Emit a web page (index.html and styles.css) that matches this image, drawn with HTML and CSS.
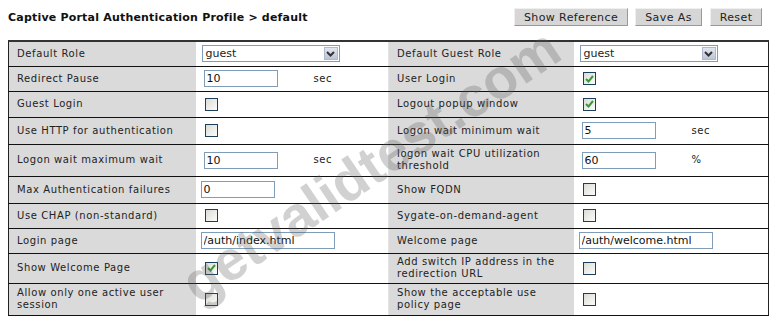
FILE: index.html
```html
<!DOCTYPE html>
<html lang="en">
<head>
    <meta charset="UTF-8">
    <title>Captive Portal Authentication Profile</title>
    <link rel="stylesheet" href="styles.css">
</head>
<body>
    <div class="page">
        <div class="top-bar">
            <h1>Captive Portal Authentication Profile &gt; default</h1>
            <div class="actions">
                <button class="btn w-ref">Show Reference</button>
                <button class="btn w-save">Save As</button>
                <button class="btn w-reset">Reset</button>
            </div>
        </div>

        <table class="profile">
            <colgroup>
                <col class="c-label">
                <col class="c-value">
                <col class="c-label2">
                <col class="c-value2">
            </colgroup>
            <tr class="h25">
                <td class="label">Default Role</td>
                <td><div class="select"><span>guest</span><i class="arrow"><svg width="9" height="6" viewBox="0 0 9 6"><path d="M1 1l3.5 3.5L8 1" fill="none" stroke="#333" stroke-width="2"/></svg></i></div></td>
                <td class="label">Default Guest Role</td>
                <td><div class="select"><span>guest</span><i class="arrow"><svg width="9" height="6" viewBox="0 0 9 6"><path d="M1 1l3.5 3.5L8 1" fill="none" stroke="#333" stroke-width="2"/></svg></i></div></td>
            </tr>
            <tr class="h25">
                <td class="label">Redirect Pause</td>
                <td><input class="field short" type="text" value="10"><span class="unit">sec</span></td>
                <td class="label">User Login</td>
                <td><span class="check on"><svg width="9" height="8" viewBox="0 0 9 8"><path d="M1 4l2.5 2.5L8 1" fill="none" stroke="#3a9a3a" stroke-width="2"/></svg></span></td>
            </tr>
            <tr class="h26">
                <td class="label">Guest Login</td>
                <td><span class="check"></span></td>
                <td class="label">Logout popup window</td>
                <td><span class="check on"><svg width="9" height="8" viewBox="0 0 9 8"><path d="M1 4l2.5 2.5L8 1" fill="none" stroke="#3a9a3a" stroke-width="2"/></svg></span></td>
            </tr>
            <tr class="h27">
                <td class="label">Use HTTP for authentication</td>
                <td><span class="check"></span></td>
                <td class="label">Logon wait minimum wait</td>
                <td><input class="field short" type="text" value="5"><span class="unit">sec</span></td>
            </tr>
            <tr class="h32">
                <td class="label">Logon wait maximum wait</td>
                <td><input class="field short" type="text" value="10"><span class="unit">sec</span></td>
                <td class="label">logon wait CPU utilization threshold</td>
                <td><input class="field short" type="text" value="60"><span class="unit">%</span></td>
            </tr>
            <tr class="h27">
                <td class="label">Max Authentication failures</td>
                <td><input class="field short tight" type="text" value="0"></td>
                <td class="label">Show FQDN</td>
                <td><span class="check"></span></td>
            </tr>
            <tr class="h25">
                <td class="label">Use CHAP (non-standard)</td>
                <td><span class="check"></span></td>
                <td class="label">Sygate-on-demand-agent</td>
                <td><span class="check"></span></td>
            </tr>
            <tr class="h25">
                <td class="label">Login page</td>
                <td><input class="field long tight" type="text" value="/auth/index.html"></td>
                <td class="label">Welcome page</td>
                <td><input class="field long tight" type="text" value="/auth/welcome.html"></td>
            </tr>
            <tr class="h30">
                <td class="label">Show Welcome Page</td>
                <td><span class="check on"><svg width="9" height="8" viewBox="0 0 9 8"><path d="M1 4l2.5 2.5L8 1" fill="none" stroke="#3a9a3a" stroke-width="2"/></svg></span></td>
                <td class="label">Add switch IP address in the redirection URL</td>
                <td><span class="check"></span></td>
            </tr>
            <tr class="h32">
                <td class="label">Allow only one active user session</td>
                <td><span class="check"></span></td>
                <td class="label">Show the acceptable use policy page</td>
                <td><span class="check"></span></td>
            </tr>
        </table>

        <div class="watermark">getvalidtest.com</div>
    </div>
</body>
</html>
```

FILE: styles.css
```css
body {
    margin: 0;
    background: #fff;
    font-family: "DejaVu Sans", Verdana, sans-serif;
    font-size: 10px;
    color: #222;
}
.page {
    position: relative;
    width: 778px;
    height: 324px;
    overflow: hidden;
}
.top-bar {
    display: flex;
    justify-content: space-between;
    align-items: center;
    padding: 8px 16px 0 8px;
    height: 18px;
}
h1 {
    margin: 0;
    font-size: 11px;
    font-weight: bold;
    letter-spacing: 0.2px;
    color: #111;
}
.actions {
    display: flex;
    gap: 7px;
}
.btn {
    font-family: "DejaVu Sans", Verdana, sans-serif;
    font-size: 11px;
    letter-spacing: 0.4px;
    color: #222;
    background: #d6d6d6;
    border: 1px solid;
    border-color: #f0f0f0 #999 #999 #f0f0f0;
    padding: 0;
    height: 18px;
    margin: 0;
}
.w-ref { width: 114px; }
.w-save { width: 67px; margin-right: 1px; }
.w-reset { width: 52px; }
.profile {
    margin: 14px 0 0 8px;
    width: 760px;
    border-collapse: collapse;
    table-layout: fixed;
    border: 1px solid #222;
    border-top: 2px solid #333;
}
.c-label { width: 187px; }
.c-value { width: 193px; }
.c-label2 { width: 185px; }
.c-value2 { width: 195px; }
.profile td {
    border-bottom: 1px solid #111;
    padding: 0 0 0 6px;
    vertical-align: middle;
    line-height: 12px;
    white-space: nowrap;
}
.profile td.label {
    background: #dadada;
    padding-left: 8px;
    padding-right: 12px;
    white-space: normal;
    color: #222;
    letter-spacing: 0.6px;
}
.profile td:nth-child(3) {
    border-left: 1px solid #e4e4e4;
}
.h25 { height: 25px; }
.h26 { height: 26px; }
.h27 { height: 27px; }
.h30 { height: 30px; }
.h32 { height: 32px; }
.select {
    display: flex;
    justify-content: space-between;
    align-items: center;
    width: 133px;
    height: 15px;
    border: 1px solid #7f9db9;
    background: #fff;
    padding-left: 3px;
    font-size: 11px;
}
.arrow {
    display: flex;
    align-items: center;
    justify-content: center;
    width: 14px;
    height: 13px;
    margin-right: 1px;
    background: linear-gradient(#e2e6f0, #bcc4d6);
    border: 1px solid #b0b8cc;
    box-sizing: border-box;
}
.field {
    font-family: "DejaVu Sans", Verdana, sans-serif;
    font-size: 11px;
    color: #111;
    height: 17px;
    box-sizing: border-box;
    border: 1px solid #7f9db9;
    padding: 0 2px;
    margin: 0 0 0 2px;
    vertical-align: middle;
}
.field.tight { margin-left: -1px; }
.short { width: 74px; }
.long { width: 134px; }
.unit {
    display: inline-block;
    margin-left: 36px;
    vertical-align: middle;
    font-size: 10px;
    letter-spacing: 0.6px;
}
.check {
    display: inline-flex;
    align-items: center;
    justify-content: center;
    width: 13px;
    height: 13px;
    box-sizing: border-box;
    border: 1px solid #1c3f5c;
    background: linear-gradient(135deg, #dcdcd6, #fbfbfa);
    margin-left: 3px;
    vertical-align: middle;
}
.watermark {
    position: absolute;
    left: 172px;
    top: 266px;
    font-family: "Liberation Sans", Arial, sans-serif;
    font-size: 56px;
    font-weight: bold;
    line-height: 56px;
    color: rgba(90, 90, 90, 0.28);
    transform: rotate(-34deg);
    transform-origin: left top;
    pointer-events: none;
    white-space: nowrap;
}
```
